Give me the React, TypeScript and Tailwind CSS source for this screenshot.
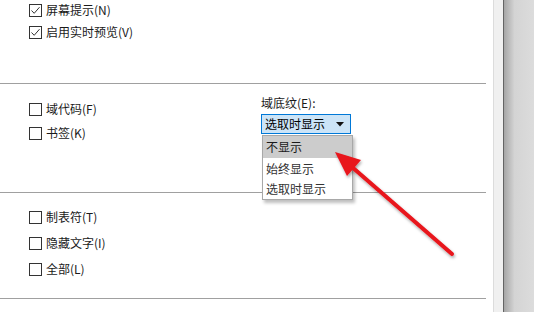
import React from 'react';

const font = { fontFamily: '"Noto Sans CJK SC", "Noto Sans", sans-serif' };

const Box: React.FC<{ checked?: boolean }> = ({ checked }) => (
  <span className="w-[13px] h-[13px] border border-[#333333] bg-white flex items-center justify-center shrink-0">
    {checked && (
      <svg width="11" height="11" viewBox="0 0 11 11">
        <path d="M1.5 5.5 L4.2 8.3 L9.5 2.2" fill="none" stroke="#333333" strokeWidth="1" />
      </svg>
    )}
  </span>
);

const Row: React.FC<{ label: string; checked?: boolean }> = ({ label, checked }) => (
  <div className="h-[20px] flex items-center gap-[4px] pl-[29px]">
    <Box checked={checked} />
    <span className="text-[12px] leading-[20px] text-[#1a1a1a]">{label}</span>
  </div>
);

export default function App() {
  return (
    <div className="relative w-[534px] h-[312px] overflow-hidden bg-white flex" style={font}>
      {/* main panel */}
      <div className="w-[493px] flex flex-col">
        <div className="h-[84px] mr-[7px] border-b border-[#a0a0a0] flex flex-col gap-[2px]">
          <Row label="屏幕提示(N)" checked />
          <Row label="启用实时预览(V)" checked />
        </div>

        <div className="h-[109px] mr-[7px] border-b border-[#a0a0a0] flex">
          <div className="w-[261px] flex flex-col gap-[4px] pt-[15px]">
            <Row label="域代码(F)" />
            <Row label="书签(K)" />
          </div>
          <div className="flex flex-col pt-[10px]">
            <div className="h-[18px] text-[12px] leading-[18px] text-[#1a1a1a]">域底纹(E):</div>
            <div className="relative mt-[2px]">
              <div className="w-[90px] h-[20px] border border-[#0078d7] bg-[#cce4f7] flex items-center justify-between pl-[3px] pr-[6px]">
                <span className="text-[12px] leading-[18px] text-black">选取时显示</span>
                <svg width="8" height="5" viewBox="0 0 8 5">
                  <path d="M0 0 H8 L4 4.5 Z" fill="#111111" />
                </svg>
              </div>
              <div className="absolute left-[1px] top-[21px] w-[91px] bg-white border border-[#a8a8a8] shadow-[2px_3px_3px_rgba(0,0,0,0.25)] flex flex-col z-10">
                <div className="h-[22px] bg-[#cccccc] pl-[3px] text-[12px] leading-[22px] text-[#1a1a1a]">不显示</div>
                <div className="h-[21px] pl-[3px] text-[12px] leading-[21px] text-[#333333]">始终显示</div>
                <div className="h-[20px] pl-[3px] text-[12px] leading-[20px] text-[#333333]">选取时显示</div>
              </div>
            </div>
          </div>
        </div>

        <div className="h-[106px] mr-[7px] border-b border-[#a0a0a0] flex flex-col gap-[6px] pt-[14px]">
          <Row label="制表符(T)" />
          <Row label="隐藏文字(I)" />
          <Row label="全部(L)" />
        </div>
      </div>

      {/* scroll edge */}
      <div className="w-[1px] bg-[#dcdcdc]" />
      <div className="w-[9px] bg-[#f0f0f0]" />
      <div className="w-[1px] bg-[#646464]" />
      <div className="flex-1 bg-[linear-gradient(to_right,#a6a6a6,#d4d4d4_35%,#dcdcdc)]" />

      {/* annotation arrow */}
      <svg className="absolute inset-0 pointer-events-none z-20" width="534" height="312" viewBox="0 0 534 312">
        <defs>
          <filter id="sh" x="-20%" y="-20%" width="140%" height="140%">
            <feDropShadow dx="1" dy="2" stdDeviation="1.5" floodColor="#000" floodOpacity="0.35" />
          </filter>
        </defs>
        <g filter="url(#sh)">
          <line x1="452" y1="254" x2="352" y2="167" stroke="#e8141b" strokeWidth="4" strokeLinecap="round" />
          <path d="M335 152 L361 160 L347 176 Z" fill="#e8141b" />
        </g>
      </svg>
    </div>
  );
}
